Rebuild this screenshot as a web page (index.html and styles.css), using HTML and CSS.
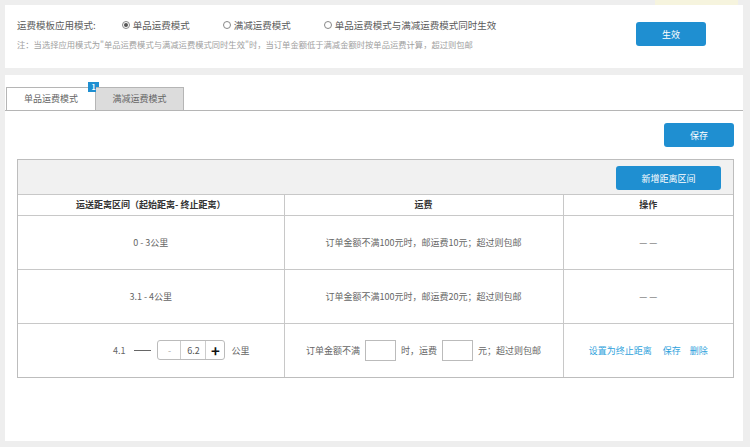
FILE: index.html
```html
<!DOCTYPE html>
<html lang="zh-CN">
<head>
<meta charset="utf-8">
<title>运费模板</title>
<link rel="stylesheet" href="styles.css">
</head>
<body>
<div class="topstrip"><span class="strip-yellow"></span></div>
<section class="panel-top">
  <div class="mode-block">
    <div class="mode-row">
      <span class="mode-label">运费模板应用模式:</span>
      <span class="opt"><span class="radio checked"></span>单品运费模式</span>
      <span class="opt"><span class="radio"></span>满减运费模式</span>
      <span class="opt"><span class="radio"></span>单品运费模式与满减运费模式同时生效</span>
    </div>
    <div class="hint">注：当选择应用模式为"单品运费模式与满减运费模式同时生效"时，当订单金额低于满减金额时按单品运费计算，超过则包邮</div>
  </div>
  <button class="btn btn-apply">生效</button>
</section>

<section class="panel-main">
  <div class="tabs">
    <div class="tab active">单品运费模式<span class="badge">1</span></div>
    <div class="tab">满减运费模式</div>
  </div>
  <div class="save-row"><button class="btn btn-save">保存</button></div>
  <div class="grid-wrap">
    <div class="grid-toolbar"><button class="btn btn-add">新增距离区间</button></div>
    <table class="grid">
      <colgroup><col class="c1"><col class="c2"><col class="c3"></colgroup>
      <thead>
        <tr><th>运送距离区间（起始距离- 终止距离）</th><th>运费</th><th>操作</th></tr>
      </thead>
      <tbody>
        <tr><td>0 - 3公里</td><td>订单金额不满100元时，邮运费10元；超过则包邮</td><td class="dash">— —</td></tr>
        <tr><td>3.1 - 4公里</td><td>订单金额不满100元时，邮运费20元；超过则包邮</td><td class="dash">— —</td></tr>
        <tr>
          <td>
            <div class="range">
              <span>4.1</span>
              <span class="line"></span>
              <span class="stepper"><span class="st-minus">-</span><span class="st-val">6.2</span><span class="st-plus">+</span></span>
              <span>公里</span>
            </div>
          </td>
          <td>
            <div class="fee">
              <span>订单金额不满</span><span class="box"></span><span>时，运费</span><span class="box"></span><span>元；超过则包邮</span>
            </div>
          </td>
          <td>
            <div class="links"><a>设置为终止距离</a><a class="l2">保存</a><a class="l3">删除</a></div>
          </td>
        </tr>
      </tbody>
    </table>
  </div>
</section>
</body>
</html>
```

FILE: styles.css
```css
* { box-sizing: border-box; }
html, body { margin: 0; padding: 0; }
body {
  background: #eeeeee;
  font-family: "Noto Sans CJK SC", "Noto Sans", sans-serif;
  font-size: 9px;
  color: #666;
  width: 750px;
  height: 447px;
  overflow: hidden;
}
.topstrip { height: 5px; display: flex; }
.strip-yellow { margin-left: 655px; width: 83px; height: 5px; background: #f6f4de; }

.panel-top {
  margin: 0 7px 0 5px;
  height: 63px;
  background: #fff;
  padding-left: 12px;
  display: flex;
  justify-content: space-between;
  align-items: flex-start;
}
.mode-block { padding-top: 13px; }
.mode-row { display: flex; align-items: center; line-height: 14px; font-size: 9.5px; color: #5a5a5a; }
.mode-label { margin-right: 26px; }
.opt { display: flex; align-items: center; margin-right: 33px; }
.radio {
  width: 8px; height: 8px; border: 1px solid #888; border-radius: 50%;
  margin-right: 3px; display: inline-flex; align-items: center; justify-content: center;
}
.radio.checked::after { content: ""; width: 4px; height: 4px; border-radius: 50%; background: #555; }
.hint { margin-top: 6px; line-height: 12px; font-size: 8.3px; color: #a0a0a0; }

.btn {
  border: 0; border-radius: 3px; background: #1f8fd1; color: #fff;
  font-family: inherit; font-size: 9px; padding: 0; cursor: pointer;
}
.btn-apply { width: 70px; height: 24px; margin: 17px 37px 0 0; }

.panel-main {
  margin: 7px 7px 0 5px;
  height: 366px;
  background: #fff;
  padding-top: 12px;
}
.tabs { display: flex; height: 24px; border-bottom: 1px solid #b5b5b5; padding-left: 1px; }
.tab {
  position: relative;
  height: 23px; line-height: 22px;
  border: 1px solid #b5b5b5; border-bottom: 0;
  text-align: center; color: #666; font-size: 9px;
}
.tab.active { width: 90px; background: #fff; }
.tab + .tab { width: 88px; background: #dcdcdc; border-left: 0; }
.badge {
  position: absolute; right: -4px; top: -6px;
  width: 11px; height: 10px; background: #1f8fd1; color: #fff;
  font-size: 7px; line-height: 10px; font-weight: 700; text-align: center;
}
.save-row { display: flex; justify-content: flex-end; padding: 12px 9px 0 0; }
.btn-save { width: 70px; height: 24px; }

.grid-wrap { margin: 12px 9px 0 12px; border: 1px solid #bdbdbd; }
.grid-toolbar {
  height: 35px; background: #f1f1f1; display: flex; justify-content: flex-end;
  padding: 6px 12px 0 0; border-bottom: 1px solid #c8c8c8;
}
.btn-add { width: 105px; height: 24px; }
.grid { width: 100%; border-collapse: collapse; table-layout: fixed; }
.c1 { width: 266px; }
.c2 { width: 279px; }
.grid th {
  height: 20px; font-size: 9px; font-weight: 700; color: #333;
  border-right: 1px solid #c8c8c8; border-bottom: 1px solid #c8c8c8; padding: 0;
}
.grid td {
  height: 54px; text-align: center; font-size: 9px; color: #666;
  border-right: 1px solid #c8c8c8; border-bottom: 1px solid #c8c8c8; padding: 0;
}
.grid tr > :last-child { border-right: 0; }
.grid tbody tr:last-child td { border-bottom: 0; }
.dash { color: #666; }

.range { display: flex; align-items: center; justify-content: flex-end; padding-right: 34px; }
.line { width: 17px; height: 1px; background: #666; margin: 0 6px 0 9px; }
.stepper {
  display: flex; height: 20px; border: 1px solid #bbb; border-radius: 3px; margin-right: 6px;
}
.stepper > span { display: flex; align-items: center; justify-content: center; }
.st-minus { width: 23px; border-right: 1px solid #ccc; color: #aaa; }
.st-val { width: 25px; border-right: 1px solid #ccc; color: #555; }
.st-plus { width: 18px; color: #111; font-size: 15px; font-weight: 700; }

.fee { display: flex; align-items: center; justify-content: center; }
.box { width: 31px; height: 21px; border: 1px solid #bbb; margin: 0 5px; }

.links { display: flex; justify-content: center; color: #2ea2dc; }
.links .l2 { margin-left: 11px; }
.links .l3 { margin-left: 9px; }
```
